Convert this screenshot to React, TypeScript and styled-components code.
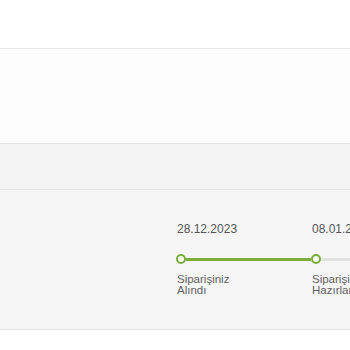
import React from "react";
import styled, { createGlobalStyle } from "styled-components";

const Global = createGlobalStyle`
  html, body { margin: 0; padding: 0; background: #ffffff; }
  body { font-family: "Liberation Sans", Arial, sans-serif; }
`;

const Page = styled.div`
  width: 350px;
  overflow: hidden;
`;

const Header = styled.header`
  height: 48px;
  background: #ffffff;
  border-bottom: 1px solid #e6e6e6;
`;

const Summary = styled.section`
  height: 94px;
  background: #fdfdfd;
  border-bottom: 1px solid #e3e3e3;
`;

const Bar = styled.div`
  height: 45px;
  background: #f4f4f4;
  border-bottom: 1px solid #e6e6e6;
`;

const Content = styled.section`
  height: 140px;
  background: #f5f5f5;
  border-bottom: 1px solid #e4e4e4;
  padding: 32px 0 0 176px;
  box-sizing: border-box;
  overflow: hidden;
`;

const Timeline = styled.div`
  display: flex;
  width: max-content;
`;

const Step = styled.div`
  width: 135px;
  display: flex;
  flex-direction: column;
`;

const DateText = styled.div`
  font-size: 12px;
  line-height: 14px;
  color: #555555;
  height: 14px;
  padding-left: 1px;
`;

const Track = styled.div`
  margin-top: 18px;
  height: 10px;
  display: flex;
  align-items: center;
`;

const Dot = styled.span`
  width: 10px;
  height: 10px;
  box-sizing: border-box;
  border-radius: 50%;
  border: 2.5px solid #79ad37;
  background: #fafafa;
  flex: none;
`;

const Line = styled.span<{ $done: boolean }>`
  flex: 1;
  height: 3px;
  background: ${(p) => (p.$done ? "#7caf3a" : "#e2e2e2")};
`;

const Label = styled.div`
  margin-top: 10px;
  padding-left: 1px;
  font-size: 11.5px;
  line-height: 11px;
  color: #626262;
`;

const steps = [
  { date: "28.12.2023", l1: "Siparişiniz", l2: "Alındı", done: true },
  { date: "08.01.2024", l1: "Siparişiniz", l2: "Hazırlanıyor", done: false },
  { date: "", l1: "Kargoya", l2: "Verildi", done: false },
];

export default function App() {
  return (
    <Page>
      <Global />
      <Header />
      <Summary />
      <Bar />
      <Content>
        <Timeline>
          {steps.map((s, i) => (
            <Step key={i}>
              <DateText>{s.date}</DateText>
              <Track>
                <Dot />
                <Line $done={s.done} />
              </Track>
              <Label>
                {s.l1}
                <br />
                {s.l2}
              </Label>
            </Step>
          ))}
        </Timeline>
      </Content>
    </Page>
  );
}
